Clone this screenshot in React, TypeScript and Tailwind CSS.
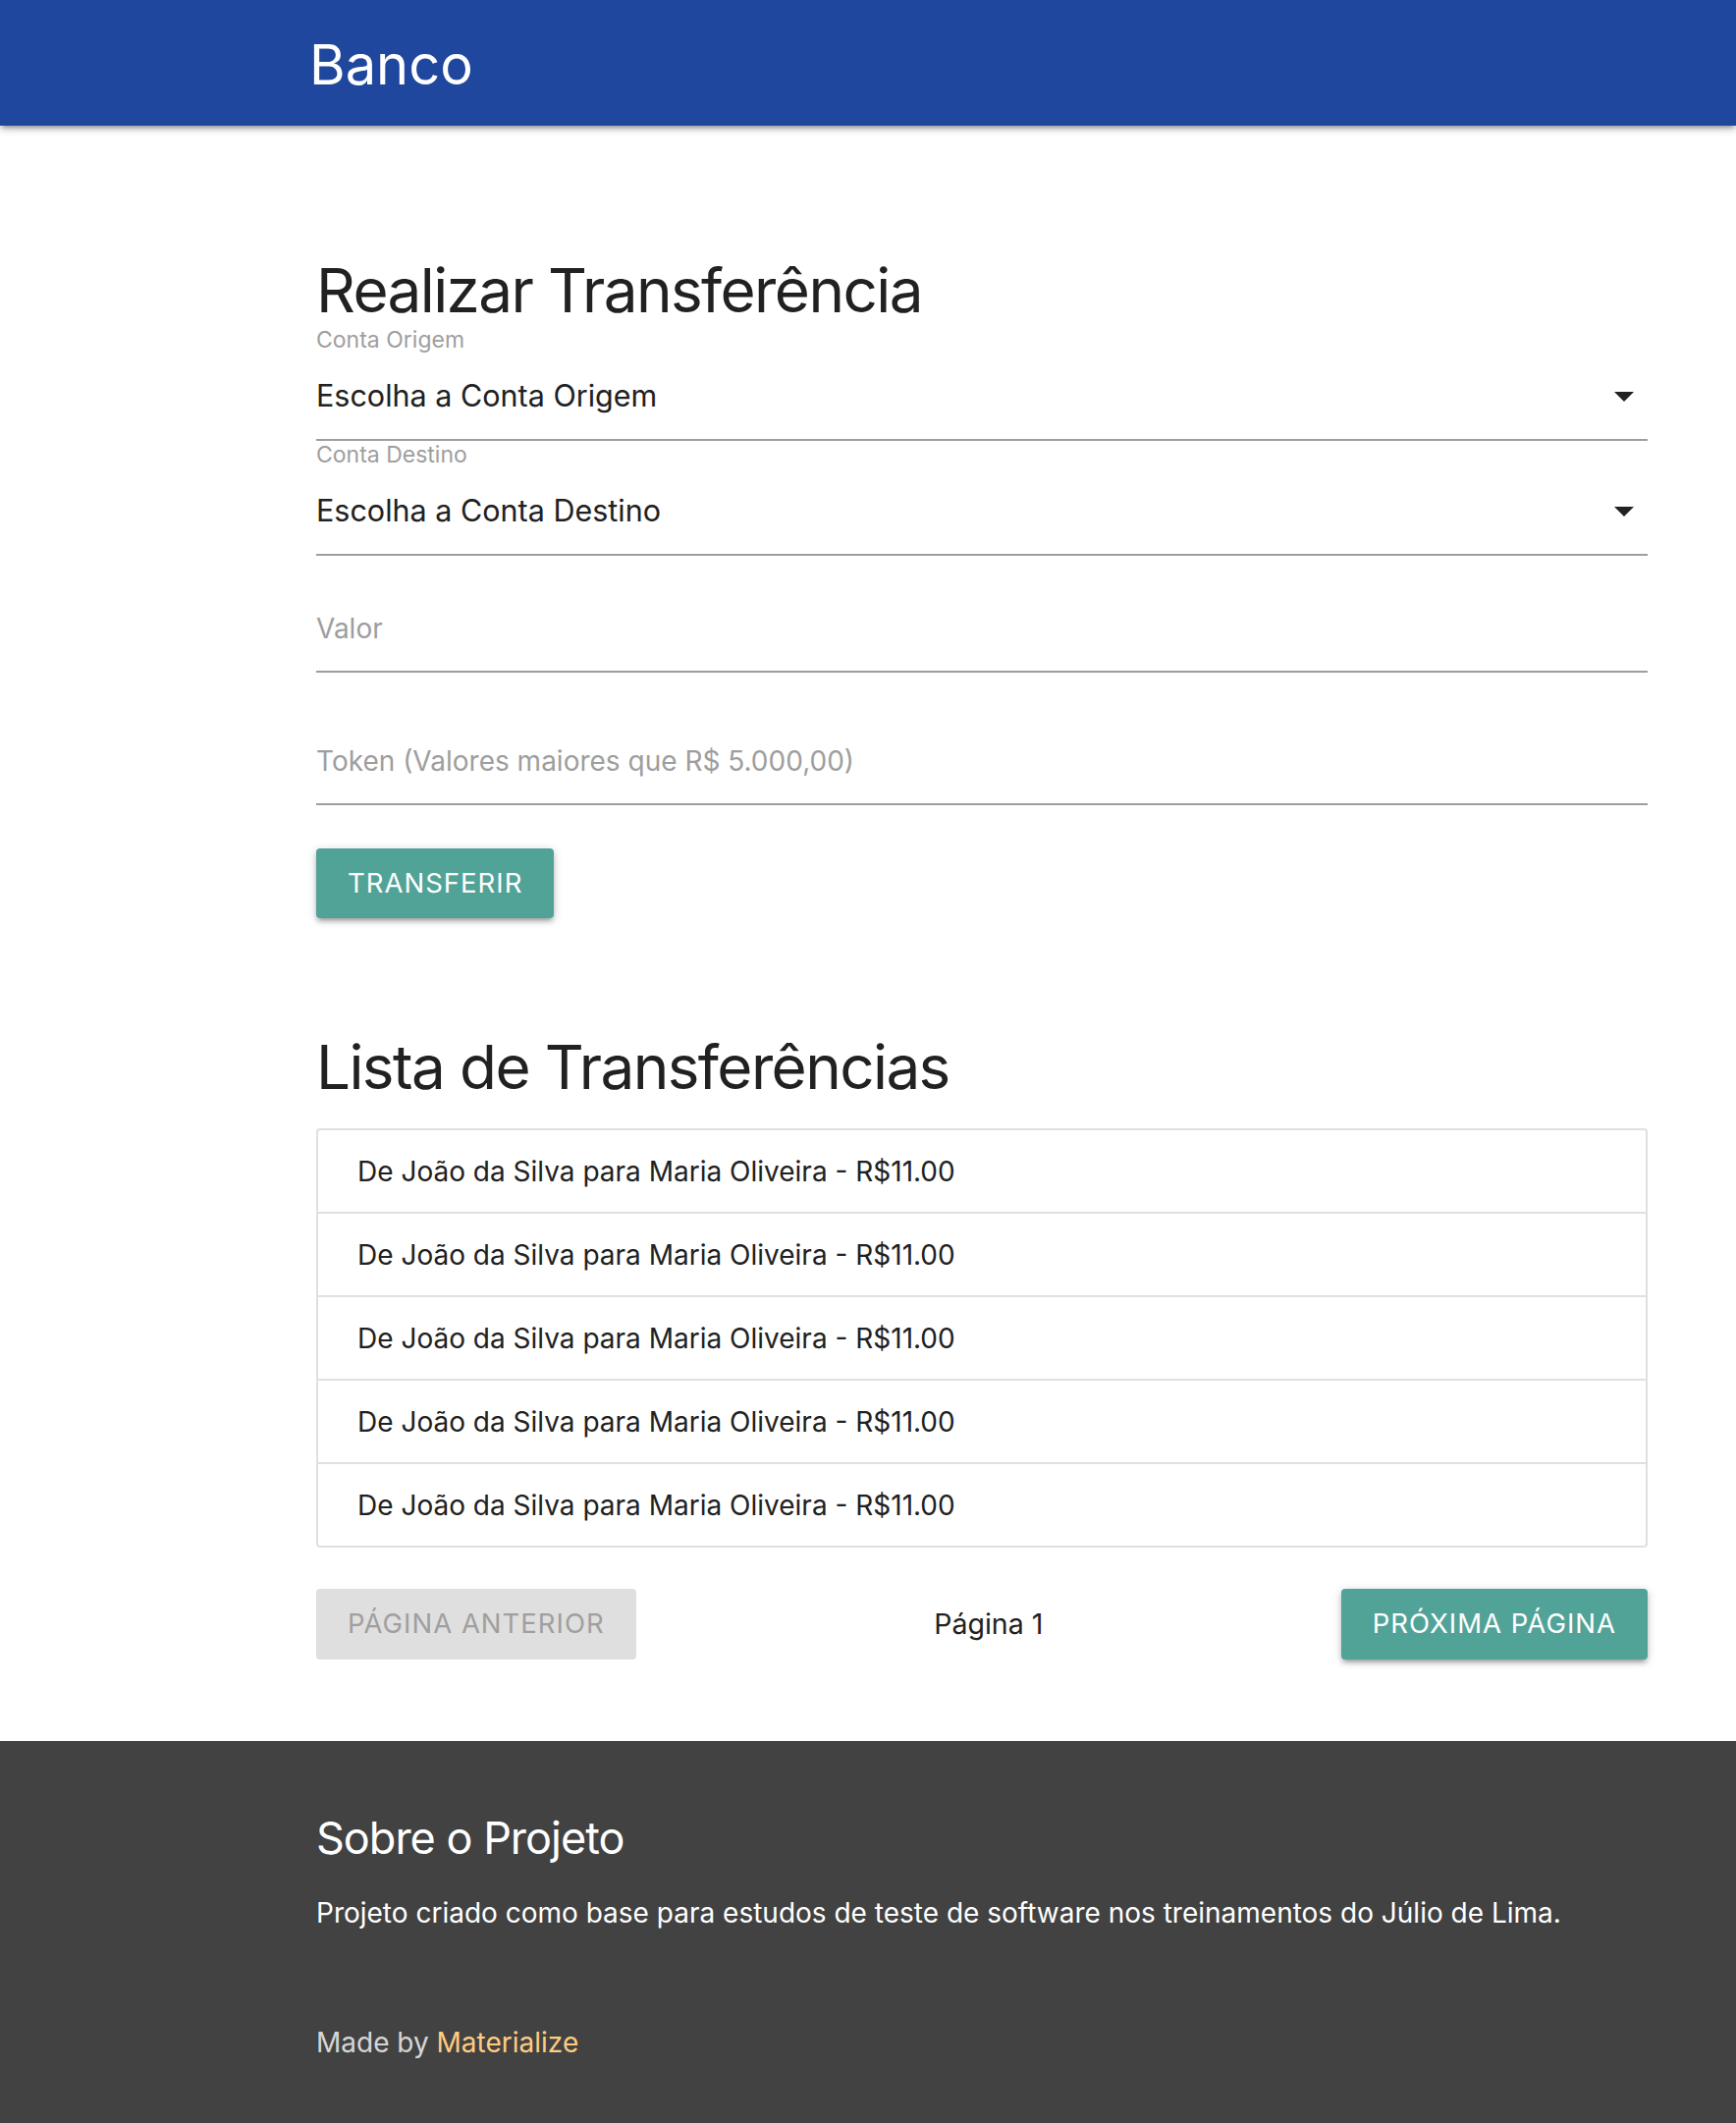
import React from "react";

function Caret() {
  return (
    <svg width="20" height="10" viewBox="0 0 20 10" className="shrink-0 mt-[3px]">
      <polygon points="0,0 20,0 10,10" fill="#222" />
    </svg>
  );
}

function SelectField({ label, value }: { label: string; value: string }) {
  return (
    <div className="mt-[3px]">
      <div className="h-[23px] text-[23px] leading-[23px] text-[#9e9e9e]">{label}</div>
      <div className="h-[91px] border-b-2 border-[#9e9e9e] flex items-center justify-between pr-[14px]">
        <span className="text-[30.5px] text-[#212121]">{value}</span>
        <Caret />
      </div>
    </div>
  );
}

function InputField({ placeholder, className }: { placeholder: string; className: string }) {
  return (
    <div className={className}>
      <div className="h-[88px] border-b-2 border-[#9e9e9e] flex items-center">
        <span className="text-[28px] text-[#9e9e9e]">{placeholder}</span>
      </div>
    </div>
  );
}

const shadow =
  "shadow-[0_4px_4px_0_rgba(0,0,0,0.14),0_6px_2px_-4px_rgba(0,0,0,0.12),0_2px_10px_0_rgba(0,0,0,0.2)]";

export default function App() {
  const rows = Array.from({ length: 5 });
  return (
    <div className="font-[family-name:Inter,sans-serif] bg-white min-h-[2162px] flex flex-col">
      <nav className="h-[128px] bg-[#20479e] shadow-[0_4px_4px_0_rgba(0,0,0,0.14),0_6px_2px_-4px_rgba(0,0,0,0.12),0_2px_10px_0_rgba(0,0,0,0.2)] relative z-10">
        <div className="h-full flex items-center pl-[315px] pt-[4px]">
          <span className="text-[56px] text-white leading-none">Banco</span>
        </div>
      </nav>

      <main className="ml-[322px] w-[1356px]">
        <h4 className="mt-[131px] h-[73px] text-[62px] leading-[73px] tracking-[-1.6px] text-[#212121]">Realizar Transferência</h4>
        <SelectField label="Conta Origem" value="Escolha a Conta Origem" />
        <SelectField label="Conta Destino" value="Escolha a Conta Destino" />
        <InputField className="mt-[31px]" placeholder="Valor" />
        <InputField className="mt-[47px]" placeholder="Token (Valores maiores que R$ 5.000,00)" />

        <button className={`mt-[44px] h-[71px] px-[32px] rounded-[4px] bg-[#51a398] text-white text-[27.5px] tracking-[1px] uppercase ${shadow}`}>
          Transferir
        </button>

        <h4 className="mt-[115px] h-[73px] text-[62px] leading-[73px] tracking-[-1.6px] text-[#212121]">Lista de Transferências</h4>

        <ul className="mt-[26px] border-2 border-[#e0e0e0] rounded-[4px]">
          {rows.map((_, i) => (
            <li
              key={i}
              className={
                i < 4
                  ? "h-[85px] flex items-center px-[40px] text-[28px] text-[#212121] border-b-2 border-[#e0e0e0]"
                  : "h-[83px] flex items-center px-[40px] text-[28px] text-[#212121]"
              }
            >
              De João da Silva para Maria Oliveira - R$11.00
            </li>
          ))}
        </ul>

        <div className="mt-[42px] flex items-center justify-between">
          <button className="h-[72px] px-[32px] rounded-[4px] bg-[#dfdfdf] text-[#9f9f9f] text-[27.5px] tracking-[1px] uppercase">
            Página Anterior
          </button>
          <span className="text-[28.5px] text-[#212121]">Página 1</span>
          <button className={`h-[72px] px-[32px] rounded-[4px] bg-[#51a398] text-white text-[27.5px] tracking-[1px] uppercase ${shadow}`}>
            Próxima Página
          </button>
        </div>
      </main>

      <footer className="mt-[83px] flex-1 bg-[#424242] pt-[73px] pb-[62px]">
        <div className="ml-[322px] w-[1356px]">
          <h5 className="h-[52px] text-[45px] leading-[52px] tracking-[-1px] text-white">Sobre o Projeto</h5>
          <p className="mt-[30px] text-[28px] leading-[40px] text-white">
            Projeto criado como base para estudos de teste de software nos treinamentos do Júlio de Lima.
          </p>
          <div className="mt-[92px] text-[28px] leading-[40px] text-[rgba(255,255,255,0.8)]">
            Made by <span className="text-[#ffcc80]">Materialize</span>
          </div>
        </div>
      </footer>
    </div>
  );
}
